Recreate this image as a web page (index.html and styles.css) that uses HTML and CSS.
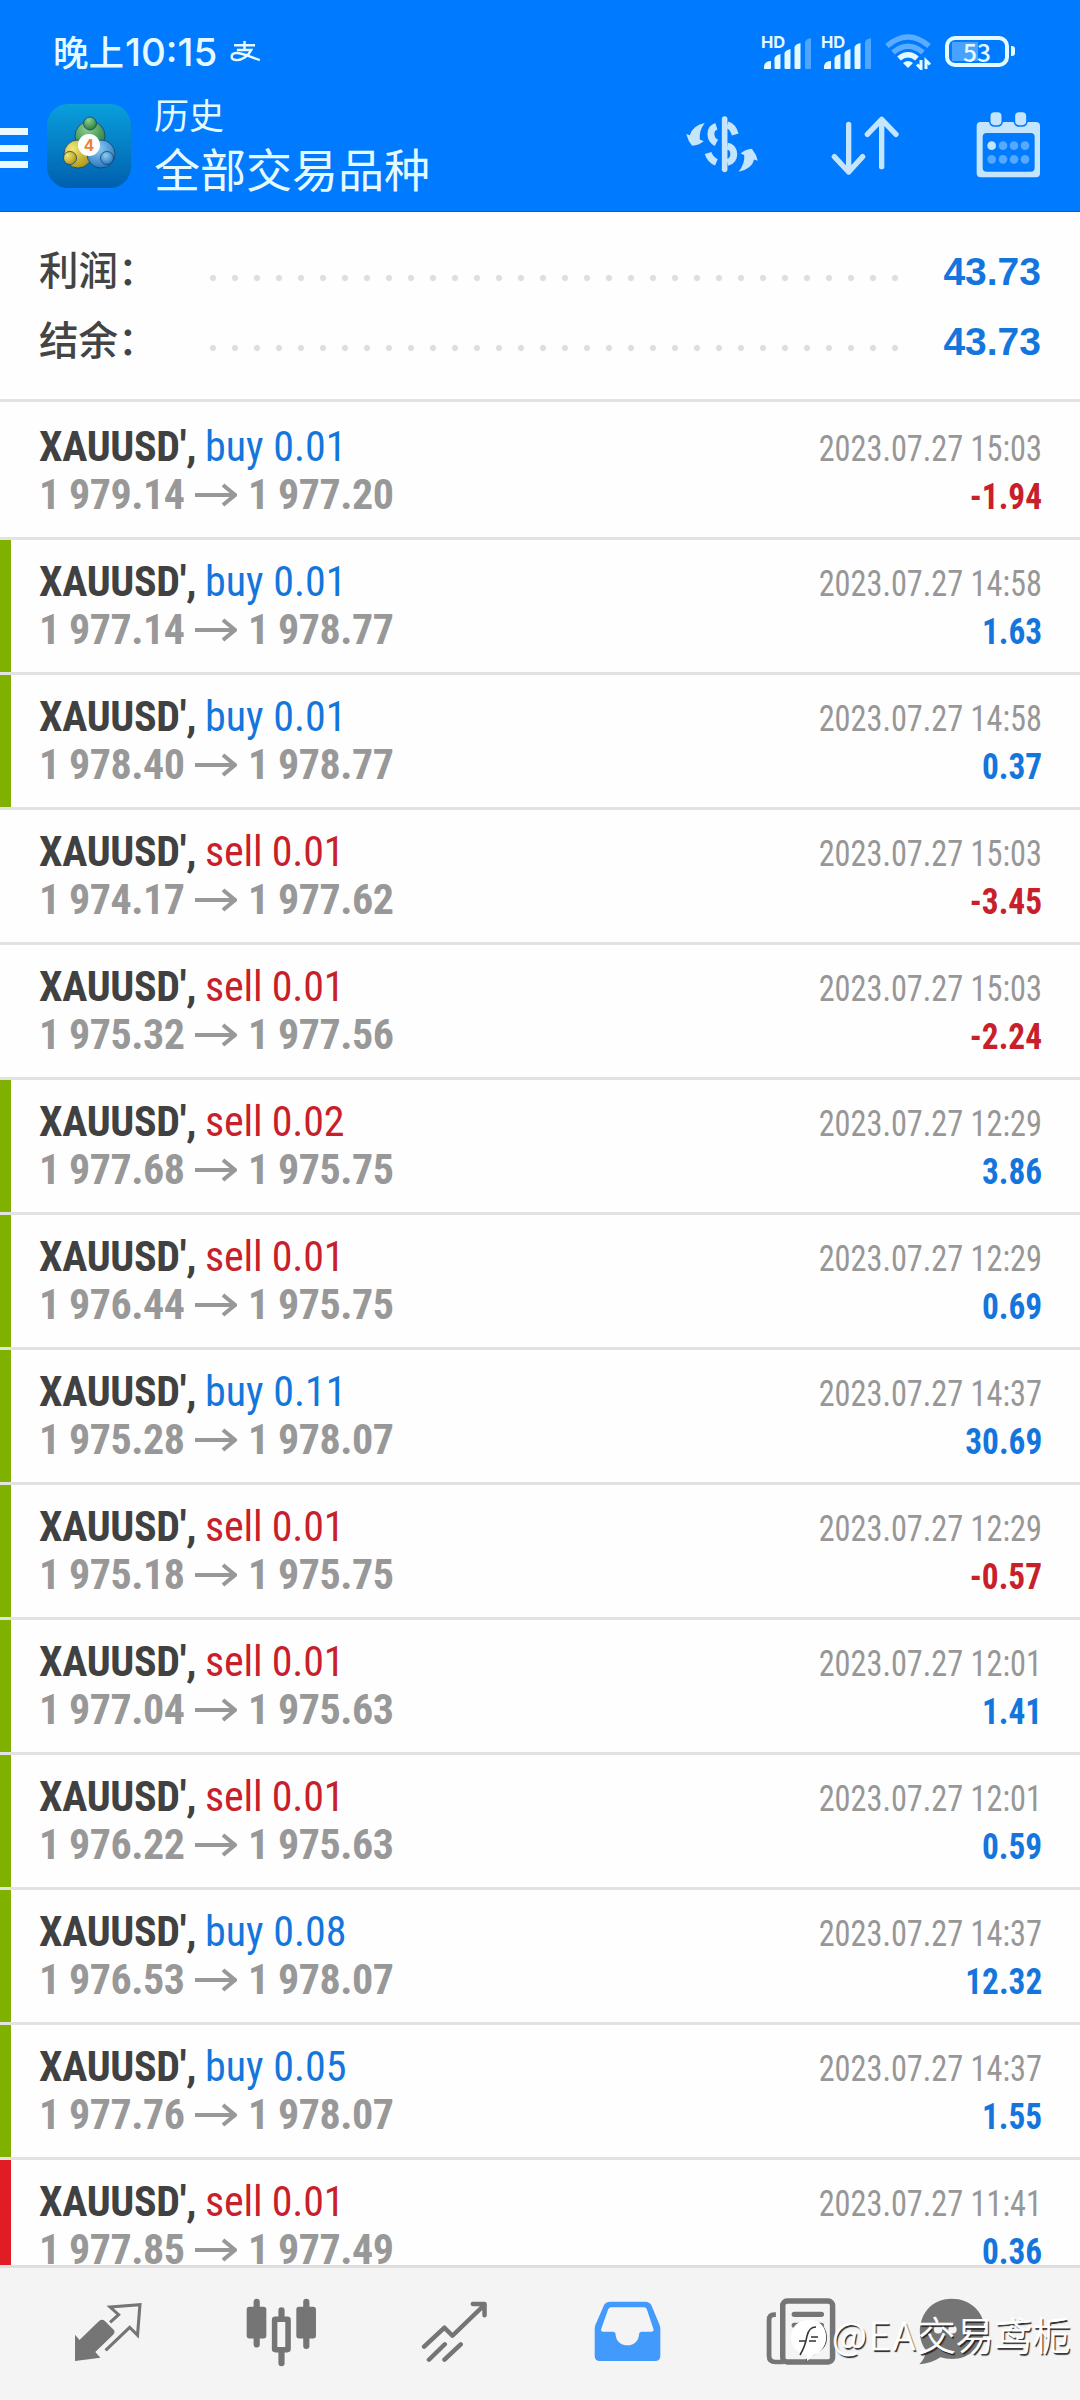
FILE: index.html
```html
<!DOCTYPE html>
<html lang="zh-CN">
<head>
<meta charset="utf-8">
<title>历史</title>
<link rel="stylesheet" href="styles.css">
</head>
<body>
<svg class="defs" width="0" height="0" aria-hidden="true">
  <symbol id="arrow" viewBox="0 0 42 24"><path d="M0 12H40M28 2L40 12L28 22" fill="none" stroke="currentColor" stroke-width="4"/></symbol>
  <symbol id="bars" viewBox="0 0 50 32">
    <g fill="currentColor"><path d="M2 32v-3q1-5 7-5v7q0 1-1 1z"/><path d="M12.500 31v-10q1-3 6-4v14q0 1-1 1h-4q-1 0-1-1z"/><path d="M22.500 31v-15q1-3 6-4v19q0 1-1 1h-4q-1 0-1-1z"/><path d="M32.500 31v-21q1-3 6-4v25q0 1-1 1h-4q-1 0-1-1z"/><path opacity=".35" d="M43 31v-26q1-3 6-4v30q0 1-1 1h-4q-1 0-1-1z"/></g>
  </symbol>
</svg>

<header class="header">
  <div class="status">
    <span class="clock">晚上<span class="time">10:15</span></span>
    <svg class="pay" viewBox="0 0 32 22" fill="none" stroke="currentColor" stroke-width="2.600"><path d="M4 4.500H26M15 0V9M7 9.500H22C19 16 12 20.500 6 20C0 19.500 0 13 6 12.500C13 12 20 16.500 31 20"/></svg>
    <div class="signals">
      <div class="signal"><span class="hd">HD</span><svg class="bars"><use href="#bars"/></svg></div>
      <div class="signal"><span class="hd">HD</span><svg class="bars"><use href="#bars"/></svg></div>
      <svg class="wifi" viewBox="0 0 48 36" fill="none" stroke="currentColor">
        <g stroke-width="5.500"><path opacity=".4" d="M3 12Q24-6 45 12"/><path opacity=".4" d="M9 18.500Q24 6 39 18.500"/><path d="M15 24.500Q24 17 33 24.500"/></g>
        <path fill="currentColor" stroke="none" d="M19 29q5-4 10 0l-5 5z"/><path stroke-width="3" d="M37 26v8.500l-4-4M42 35v-8.500l4 4"/>
      </svg>
      <div class="battery"><span>53</span></div>
    </div>
  </div>
  <div class="toolbar">
    <div class="menu"><i></i><i></i><i></i></div>
    <svg class="app" viewBox="0 0 84 84">
      <defs>
        <linearGradient id="bg" x1="0" y1="0" x2="0" y2="1"><stop offset="0" stop-color="#0a9fdc"/><stop offset="1" stop-color="#005fae"/></linearGradient>
        <radialGradient id="gr" cx=".4" cy=".25" r=".8"><stop offset="0" stop-color="#8fcf8f"/><stop offset="1" stop-color="#1f7a38"/></radialGradient>
        <radialGradient id="ye" cx=".3" cy=".3" r=".8"><stop offset="0" stop-color="#f3e674"/><stop offset="1" stop-color="#a99412"/></radialGradient>
        <radialGradient id="bl" cx=".4" cy=".3" r=".8"><stop offset="0" stop-color="#8ecdf6"/><stop offset="1" stop-color="#1b6db8"/></radialGradient>
      </defs>
      <rect width="84" height="84" rx="21" fill="url(#bg)"/>
      <g stroke="#17406a" stroke-width=".8">
        <circle cx="43" cy="32" r="15" fill="url(#gr)"/><circle cx="31" cy="50" r="14" fill="url(#ye)"/><circle cx="54" cy="50" r="14" fill="url(#bl)"/>
        <circle cx="43" cy="19.500" r="6.500" fill="url(#gr)"/><circle cx="23" cy="54" r="6.500" fill="url(#ye)"/><circle cx="60" cy="54" r="6.500" fill="url(#bl)"/>
      </g>
      <circle cx="42" cy="41" r="11" fill="#fff"/>
      <text class="four" x="42" y="47" text-anchor="middle">4</text>
    </svg>
    <div class="titles"><div class="title">历史</div><div class="subtitle">全部交易品种</div></div>
    <svg class="ico-dollar" viewBox="75 345 222 175">
      <g fill="none" stroke="currentColor" stroke-width="15"><path stroke-linecap="round" stroke-width="17" d="M194 357V509"/><path stroke-width="21" d="M169 379C147 386 147 417 169 429M202 375Q219 380 226 404M202 439C227 442 229 482 202 488M144 460Q150 480 169 488"/></g>
      <g fill="currentColor"><path d="M134 369Q96 377 89 406L78 402Q84 424 96 438Q116 436 131 424L119 419Q116 392 134 369Z"/><path d="M236 516Q276 508 283 479L294 483Q290 464 276 447Q258 448 242 461L253 466Q256 492 236 516Z"/></g>
    </svg>
    <svg class="ico-sort" viewBox="510 345 210 183" fill="none" stroke="currentColor" stroke-width="16" stroke-linecap="round" stroke-linejoin="round"><path d="M566 373V516M523 470L566 516L608 470M665 500V358M622 403L665 358L708 403"/></svg>
    <svg class="ico-calendar" viewBox="948 333 195 201">
      <path fill="currentColor" fill-rule="evenodd" d="M962 366H1128Q1140 366 1140 378V520Q1140 532 1128 532H962Q950 532 950 520V378Q950 366 962 366ZM980 399Q968 399 968 411V503Q968 515 980 515H1112Q1124 515 1124 503V411Q1124 399 1112 399Z"/>
      <g fill="currentColor" stroke="#007aff" stroke-width="5"><rect x="989" y="334" width="38" height="44" rx="14"/><rect x="1063" y="334" width="38" height="44" rx="14"/></g>
      <circle cx="995" cy="437" r="13" fill="currentColor"/>
      <g fill="#55a9ff"><circle cx="1029" cy="437" r="13"/><circle cx="1062" cy="437" r="13"/><circle cx="1095" cy="437" r="13"/><circle cx="995" cy="478" r="13"/><circle cx="1029" cy="478" r="13"/><circle cx="1062" cy="478" r="13"/><circle cx="1095" cy="478" r="13"/></g>
    </svg>
  </div>
</header>

<section class="summary">
  <div class="total"><span class="label">利润：</span><span class="dots"></span><span class="sum">43.73</span></div>
  <div class="total"><span class="label">结余：</span><span class="dots"></span><span class="sum">43.73</span></div>
</section>

<main class="list">
  <div class="row"><div class="line"><b>XAUUSD',</b><span class="buy">buy 0.01</span><time>2023.07.27 15:03</time></div><div class="line prices"><span>1 979.14</span><svg><use href="#arrow"/></svg><span>1 977.20</span><strong class="loss">-1.94</strong></div></div>
  <div class="row tp"><div class="line"><b>XAUUSD',</b><span class="buy">buy 0.01</span><time>2023.07.27 14:58</time></div><div class="line prices"><span>1 977.14</span><svg><use href="#arrow"/></svg><span>1 978.77</span><strong>1.63</strong></div></div>
  <div class="row tp"><div class="line"><b>XAUUSD',</b><span class="buy">buy 0.01</span><time>2023.07.27 14:58</time></div><div class="line prices"><span>1 978.40</span><svg><use href="#arrow"/></svg><span>1 978.77</span><strong>0.37</strong></div></div>
  <div class="row"><div class="line"><b>XAUUSD',</b><span class="sell">sell 0.01</span><time>2023.07.27 15:03</time></div><div class="line prices"><span>1 974.17</span><svg><use href="#arrow"/></svg><span>1 977.62</span><strong class="loss">-3.45</strong></div></div>
  <div class="row"><div class="line"><b>XAUUSD',</b><span class="sell">sell 0.01</span><time>2023.07.27 15:03</time></div><div class="line prices"><span>1 975.32</span><svg><use href="#arrow"/></svg><span>1 977.56</span><strong class="loss">-2.24</strong></div></div>
  <div class="row tp"><div class="line"><b>XAUUSD',</b><span class="sell">sell 0.02</span><time>2023.07.27 12:29</time></div><div class="line prices"><span>1 977.68</span><svg><use href="#arrow"/></svg><span>1 975.75</span><strong>3.86</strong></div></div>
  <div class="row tp"><div class="line"><b>XAUUSD',</b><span class="sell">sell 0.01</span><time>2023.07.27 12:29</time></div><div class="line prices"><span>1 976.44</span><svg><use href="#arrow"/></svg><span>1 975.75</span><strong>0.69</strong></div></div>
  <div class="row tp"><div class="line"><b>XAUUSD',</b><span class="buy">buy 0.11</span><time>2023.07.27 14:37</time></div><div class="line prices"><span>1 975.28</span><svg><use href="#arrow"/></svg><span>1 978.07</span><strong>30.69</strong></div></div>
  <div class="row tp"><div class="line"><b>XAUUSD',</b><span class="sell">sell 0.01</span><time>2023.07.27 12:29</time></div><div class="line prices"><span>1 975.18</span><svg><use href="#arrow"/></svg><span>1 975.75</span><strong class="loss">-0.57</strong></div></div>
  <div class="row tp"><div class="line"><b>XAUUSD',</b><span class="sell">sell 0.01</span><time>2023.07.27 12:01</time></div><div class="line prices"><span>1 977.04</span><svg><use href="#arrow"/></svg><span>1 975.63</span><strong>1.41</strong></div></div>
  <div class="row tp"><div class="line"><b>XAUUSD',</b><span class="sell">sell 0.01</span><time>2023.07.27 12:01</time></div><div class="line prices"><span>1 976.22</span><svg><use href="#arrow"/></svg><span>1 975.63</span><strong>0.59</strong></div></div>
  <div class="row tp"><div class="line"><b>XAUUSD',</b><span class="buy">buy 0.08</span><time>2023.07.27 14:37</time></div><div class="line prices"><span>1 976.53</span><svg><use href="#arrow"/></svg><span>1 978.07</span><strong>12.32</strong></div></div>
  <div class="row tp"><div class="line"><b>XAUUSD',</b><span class="buy">buy 0.05</span><time>2023.07.27 14:37</time></div><div class="line prices"><span>1 977.76</span><svg><use href="#arrow"/></svg><span>1 978.07</span><strong>1.55</strong></div></div>
  <div class="row sl"><div class="line"><b>XAUUSD',</b><span class="sell">sell 0.01</span><time>2023.07.27 11:41</time></div><div class="line prices"><span>1 977.85</span><svg><use href="#arrow"/></svg><span>1 977.49</span><strong>0.36</strong></div></div>
</main>

<nav class="tabs">
  <svg class="tab-quotes" viewBox="216 516 198 180" preserveAspectRatio="none"><path fill="currentColor" d="M219 614L232 630L289 573Q298 566 306 573L330 598Q338 606 330 614L278 666L293 683L219 693Z"/><path fill="none" stroke="currentColor" stroke-width="9" d="M321 577L346 554L321 531L408 524L401 616L378 592L308 661"/></svg>
  <svg class="tab-chart" viewBox="714 502 206 208" preserveAspectRatio="none"><g fill="currentColor"><rect x="716" y="528" width="57" height="96" rx="8"/><rect x="860" y="528" width="57" height="96" rx="8"/></g><g stroke="currentColor" stroke-width="18" stroke-linecap="round"><path d="M745 513V642M889 513V647M817 539V560M817 662V699"/></g><rect x="797" y="566" width="39" height="92" rx="2" fill="none" stroke="currentColor" stroke-width="16"/></svg>
  <svg class="tab-trade" viewBox="1222 510 194 186" preserveAspectRatio="none" fill="none" stroke="currentColor" stroke-width="13" stroke-linecap="round" stroke-linejoin="round"><path d="M1231 647L1290 590L1313 614L1406 521M1372 519H1406V553M1245 686L1291 640M1290 686L1337 640"/></svg>
  <svg class="tab-history" viewBox="157 510 195 185" preserveAspectRatio="none"><path fill="currentColor" fill-rule="evenodd" d="M204 512H306Q319 512 324 523L348 583Q350 588 350 596V677Q350 692 335 692H174Q159 692 159 677V596Q159 588 161 583L186 523Q191 512 204 512ZM207 529Q201 529 198 536L178 595Q176 603 184 603H212Q220 603 220 612C223 655 285 655 288 612Q288 603 296 603H324Q332 603 330 595L311 536Q309 529 302 529Z"/></svg>
  <svg class="tab-news" viewBox="656 502 205 201" preserveAspectRatio="none"><g fill="none" stroke="currentColor"><rect x="705" y="511" width="146" height="183" rx="13" stroke-width="16"/><path stroke-width="14" d="M685 552H680Q665 552 665 568V676Q665 694 684 694H708"/><path stroke-width="16" stroke-linecap="round" d="M739 551H818M739 584H818M739 617H818"/></g></svg>
  <svg class="tab-chat" viewBox="1100 502 194 202" preserveAspectRatio="none"><path fill="currentColor" d="M1198 504C1250 504 1292 543 1292 594C1292 645 1250 686 1198 686Q1180 686 1165 681Q1138 700 1104 702Q1121 684 1124 659C1086 617 1104 504 1198 504Z"/><g fill="#f4f4f4"><circle cx="1158" cy="597" r="12"/><circle cx="1200" cy="597" r="12"/><circle cx="1242" cy="597" r="12"/></g></svg>
</nav>

<div class="watermark">
  <svg viewBox="0 0 38 44"><path fill="#555" d="M15 43L18 36Q37 33 36 17Q35 8 29 4Q34 10 35 18Q35 32 15 40Z"/><path fill="#fff" d="M18 1C29 1 35 8 35 18C35 28 29 34 23 36L16 42V36C6 34 0 28 0 18C0 8 7 1 18 1Z"/><path fill="none" stroke="#333" stroke-width="1.500" d="M9 36Q14 28 16 17Q18 8 25 8M8 22H15M18 22H25M20 18H27"/></svg>
  <span><span class="latin">@EA</span>交易鸢栀</span>
</div>
</body>
</html>
```
FILE: styles.css
```css
* { box-sizing: border-box; }

body {
  margin: 0;
  width: 1080px;
  height: 2400px;
  overflow: hidden;
  position: relative;
  display: flex;
  flex-direction: column;
  background: #fefefe;
  font-family: "Roboto Condensed", Roboto, "Noto Sans CJK SC", sans-serif;
}

svg { display: block; flex: none; }
.defs { position: absolute; }

/* Header */
.header {
  height: 212px;
  flex: none;
  background: #007aff;
  border-bottom: 1px solid #0a5fb5;
  font-family: "Noto Sans CJK SC", sans-serif;
  color: #e4faff;
}
.status { height: 90px; padding: 35px 66px 0 53px; display: flex; align-items: flex-start; }
.clock { font-size: 35.500px; font-weight: 500; line-height: 36px; white-space: nowrap; display: flex; margin-top: -2px; }
.time { font-family: Inter, sans-serif; font-size: 38.500px; font-weight: 500; line-height: 38px; margin-left: 1px; }
.pay { width: 31px; height: 21px; margin: 6px 0 0 13px; }
.signals { margin-left: auto; display: flex; align-items: flex-start; }
.signal { width: 60px; height: 34px; display: grid; }
.hd { grid-area: 1 / 1; font: 700 16.500px/12px Inter, sans-serif; margin-top: 1px; }
.bars { grid-area: 1 / 1; width: 50px; height: 32px; margin: 2px 0 0 1px; }
.wifi { width: 48px; height: 36px; margin: -1px 13px 0 3px; }
.battery {
  width: 64px;
  height: 31px;
  margin-top: 1px;
  margin-right: 5px;
  border: 4px solid;
  border-radius: 10px;
  position: relative;
  background: linear-gradient(90deg, #4aa2ff 50%, transparent 50%) 3px 2px / 53px 19px no-repeat;
  display: flex;
  align-items: center;
  justify-content: center;
  font: 500 24.500px/24px "Noto Sans CJK SC", sans-serif;
}
.battery::after { content: ""; position: absolute; right: -10px; top: 6px; width: 4px; height: 10px; border-radius: 0 3px 3px 0; background: #e4faff; }

.toolbar { height: 121px; display: flex; align-items: flex-start; color: #c5e5fd; }
.menu { width: 47px; padding-top: 38px; display: flex; flex-direction: column; gap: 9.500px; flex: none; }
.menu i { width: 28px; height: 7px; background: #e9f9ff; }
.app { width: 84px; height: 84px; margin-top: 14px; }
.four { font: 700 17px "Liberation Sans", sans-serif; fill: #ee7f33; }
.titles { width: 530px; margin-left: 23px; padding-top: 4px; color: #e4faff; }
.title { font-size: 35px; line-height: 40px; }
.subtitle { font-size: 46px; line-height: 60px; margin-top: 3px; }
.ico-dollar { width: 74px; height: 58px; margin: 25px 0 0 1px; }
.ico-sort { width: 70px; height: 61px; margin: 25px 0 0 71px; }
.ico-calendar { width: 65px; height: 67px; margin: 21px 0 0 76px; }

/* Totals */
.summary { height: 187px; flex: none; padding: 24px 39px 0 39px; }
.total { height: 70px; display: flex; align-items: center; }
.label { width: 163px; font: 500 39.500px/56px "Noto Sans CJK SC", sans-serif; color: #444; white-space: nowrap; margin-bottom: 6px; }
.dots { width: 704px; height: 8px; margin-top: 14px; background: radial-gradient(circle at 11px 4px, #dedede 2.500px, transparent 3.700px) 0 0 / 22px 8px; }
.sum { margin-left: auto; font: 700 39px/50px "Liberation Sans", sans-serif; color: #1476dc; margin-top: 2px; }

/* Deals */
.list { height: 1866px; flex: none; overflow: hidden; }
.row { height: 135px; padding: 18px 38px 0 39px; border-top: 3px solid #e2e2e2; }
.row:first-child { height: 138px; padding-top: 21px; }
.row.tp { background: linear-gradient(#80b000, #80b000) 0 0 / 11px 100% no-repeat; }
.row.sl { background: linear-gradient(#e01c24, #e01c24) 0 0 / 11px 100% no-repeat; }
.line { height: 48px; display: flex; align-items: baseline; font-size: 42px; line-height: 48px; white-space: nowrap; }
.line b { width: 166px; color: #414141; font-weight: 700; letter-spacing: -0.300px; }
.buy { color: #1476dc; }
.sell { color: #c8202a; letter-spacing: -0.200px; }
.line time { margin-left: auto; font-size: 36px; color: #979797; font-weight: 400; transform: scaleX(0.897); transform-origin: right; }
.prices { color: #989898; font-weight: 700; }
.prices span { width: 146px; letter-spacing: -0.450px; }
.prices svg { width: 42px; height: 24px; margin: 0 11px 0 10px; align-self: center; }
.line strong { margin-left: auto; font-size: 36px; font-weight: 700; color: #1476dc; transform: scaleX(0.925); transform-origin: right; }
.line .loss { color: #c8202a; }

/* Tabs */
.tabs { flex: 1; border-top: 3px solid #dedede; background: #f4f4f4; color: #757575; display: flex; align-items: flex-start; padding: 30px 0 0 74px; }
.tab-quotes { width: 68px; height: 60px; margin-top: 4px; }
.tab-chart { width: 71px; height: 69px; margin-left: 104px; }
.tab-trade { width: 67px; height: 62px; margin: 3px 0 0 104px; }
.tab-history { width: 67px; height: 61px; margin: 3px 0 0 106px; color: #429afc; }
.tab-news { width: 70px; height: 67px; margin-left: 105px; }
.tab-chat { width: 67px; height: 67px; margin-left: 82px; }

/* Watermark over the tab bar */
.watermark { position: absolute; left: 791px; top: 2310px; display: flex; align-items: flex-start; color: #fff; }
.watermark svg { width: 38px; height: 54px; margin-top: 4px; }
.watermark > span { font: 300 38.300px/54px "Noto Sans CJK SC", sans-serif; margin-left: 3px; margin-top: -3px; white-space: nowrap; -webkit-text-stroke: 0.700px #fff; text-shadow: 1.500px 1.500px 1px #222; }
.latin { letter-spacing: 2px; }
```
